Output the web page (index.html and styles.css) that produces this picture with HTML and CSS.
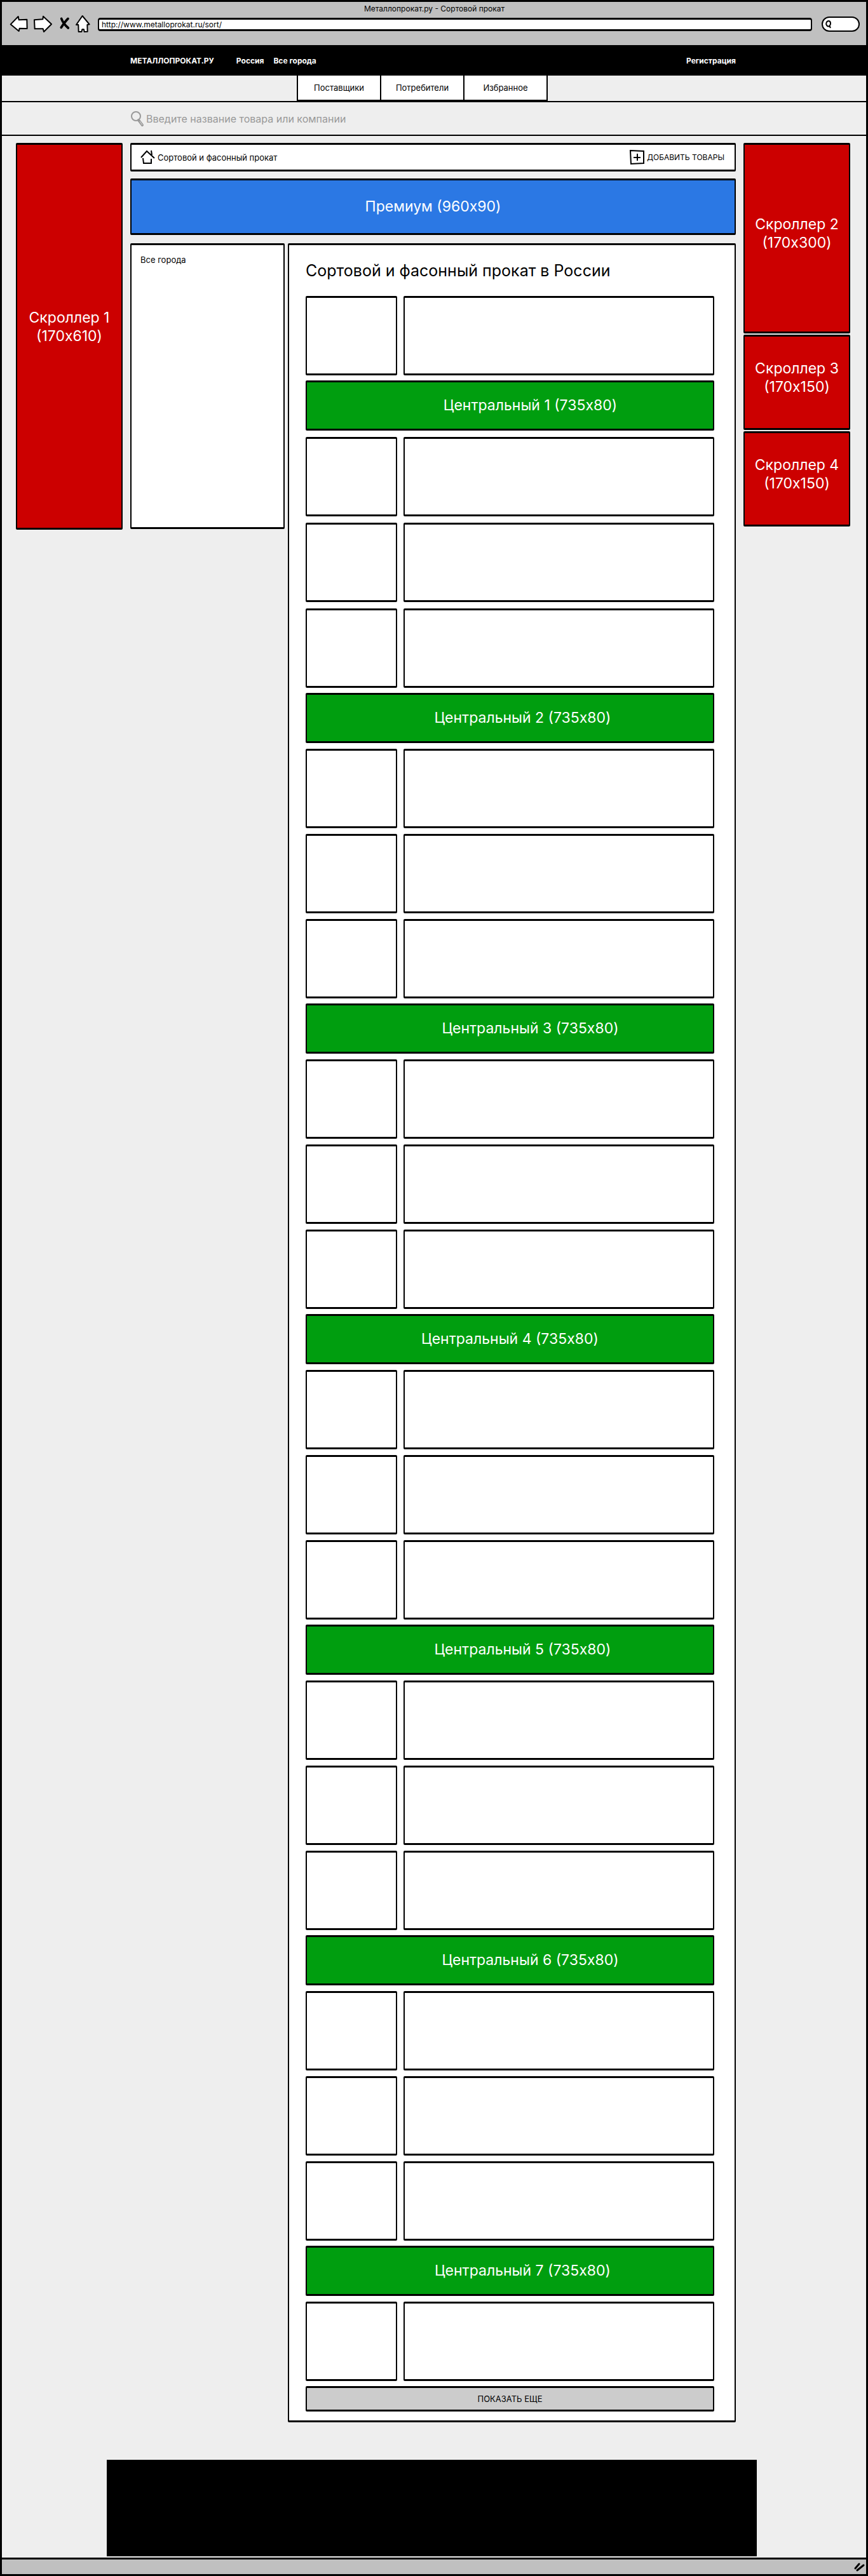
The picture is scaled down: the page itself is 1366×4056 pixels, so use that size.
FILE: index.html
```html
<!DOCTYPE html>
<html lang="ru">
<head>
<meta charset="utf-8">
<meta name="viewport" content="width=device-width, initial-scale=1">
<title>Металлопрокат.ру - Сортовой прокат</title>
<link rel="stylesheet" href="styles.css">
</head>
<body>
<div class="window">
  <div class="chrome">
    <p class="chrome-title">Металлопрокат.ру - Сортовой прокат</p>
    <div class="toolbar">
      <button class="tool" type="button" aria-label="Назад"><svg width="32" height="30" viewBox="42 6 96 90"><path class="tool-shape" d="M50 52L86 15L89 31L127 29L128 72L92 71L89 84Z"/></svg></button>
      <button class="tool" type="button" aria-label="Вперёд"><svg width="32" height="30" viewBox="158 6 96 90"><path class="tool-shape" d="M161 31L201 28L203 14L242 51L206 87L202 73L163 73Z"/></svg></button>
      <button class="tool" type="button" aria-label="Стоп"><svg width="20" height="30" viewBox="276 6 60 90"><path class="tool-cross" d="M290 25Q298 48 322 69M321 25Q306 40 289 67"/></svg></button>
      <button class="tool" type="button" aria-label="Домой"><svg width="24" height="30" viewBox="356 6 72 90"><path class="tool-shape" d="M388 12L421 52L411 54L412 86L397 87L395 76L387 76L384 87L370 87L369 54L359 54Z"/></svg></button>
      <input class="url" type="text" value="http://www.metalloprokat.ru/sort/" aria-label="Адрес">
      <label class="pill">
        <svg width="12" height="15" viewBox="0 0 12 15"><path d="M3 9C1 6 3 2 6 2S10 6 8 9S4 10 3 9M7 9L9 13" fill="none" stroke="#000" stroke-width="2"/></svg>
        <input class="pill-input" type="text" aria-label="Поиск в интернете">
      </label>
    </div>
  </div>

  <header>
    <div class="topbar">
      <a class="brand" href="#">МЕТАЛЛОПРОКАТ.РУ</a>
      <a href="#">Россия</a>
      <a href="#">Все города</a>
      <a class="register" href="#">Регистрация</a>
    </div>
    <nav class="tabs">
      <a class="tab" href="#">Поставщики</a>
      <a class="tab" href="#">Потребители</a>
      <a class="tab" href="#">Избранное</a>
    </nav>
    <label class="search">
      <svg width="21" height="24" viewBox="0 0 21 24" fill="none" stroke="#999"><ellipse cx="9" cy="8" rx="7" ry="7" stroke-width="2"/><path d="M13 14L19 22" stroke-width="4" stroke-linecap="round"/><path d="M15 16L19 22" stroke="#ddd" stroke-width="1"/></svg>
      <input class="search-input" type="search" placeholder="Введите название товара или компании" aria-label="Поиск">
    </label>
  </header>

  <div class="page">
    <aside class="rail">
      <a class="banner scroller scroller-tall" href="#">Скроллер 1<br>(170x610)</a>
    </aside>

    <div class="center">
      <div class="crumbs box">
        <a class="crumb" href="#"><svg width="23" height="23" viewBox="0 0 23 23" fill="none" stroke="#000" stroke-width="2"><path d="M1 12L10 2L22 13M17 1L18 8M4 13L5 21L17 21L17 14"/></svg>Сортовой и фасонный прокат</a>
        <a class="crumb crumb-add" href="#"><svg width="23" height="23" viewBox="0 0 23 23" fill="none" stroke="#000" stroke-width="2"><path d="M1 1L22 2L22 21L2 22ZM12 6V17M6 12H17"/></svg>ДОБАВИТЬ ТОВАРЫ</a>
      </div>
      <a class="banner premium" href="#">Премиум (960x90)</a>

      <div class="columns">
        <aside class="cities box"><a href="#">Все города</a></aside>
        <main class="catalog box">
          <h1>Сортовой и фасонный прокат в России</h1>
          <div class="list">
            <section class="group">
              <article class="item"><div class="box"></div><div class="box"></div></article>
            </section>
            <section class="group group-lead">
              <a class="banner central central-far" href="#">Центральный 1 (735x80)</a>
              <article class="item"><div class="box"></div><div class="box"></div></article>
              <article class="item"><div class="box"></div><div class="box"></div></article>
              <article class="item"><div class="box"></div><div class="box"></div></article>
            </section>
            <section class="group">
              <a class="banner central central-mid" href="#">Центральный 2 (735x80)</a>
              <article class="item"><div class="box"></div><div class="box"></div></article>
              <article class="item"><div class="box"></div><div class="box"></div></article>
              <article class="item"><div class="box"></div><div class="box"></div></article>
            </section>
            <section class="group">
              <a class="banner central central-far" href="#">Центральный 3 (735x80)</a>
              <article class="item"><div class="box"></div><div class="box"></div></article>
              <article class="item"><div class="box"></div><div class="box"></div></article>
              <article class="item"><div class="box"></div><div class="box"></div></article>
            </section>
            <section class="group">
              <a class="banner central" href="#">Центральный 4 (735x80)</a>
              <article class="item"><div class="box"></div><div class="box"></div></article>
              <article class="item"><div class="box"></div><div class="box"></div></article>
              <article class="item"><div class="box"></div><div class="box"></div></article>
            </section>
            <section class="group">
              <a class="banner central central-mid" href="#">Центральный 5 (735x80)</a>
              <article class="item"><div class="box"></div><div class="box"></div></article>
              <article class="item"><div class="box"></div><div class="box"></div></article>
              <article class="item"><div class="box"></div><div class="box"></div></article>
            </section>
            <section class="group">
              <a class="banner central central-far" href="#">Центральный 6 (735x80)</a>
              <article class="item"><div class="box"></div><div class="box"></div></article>
              <article class="item"><div class="box"></div><div class="box"></div></article>
              <article class="item"><div class="box"></div><div class="box"></div></article>
            </section>
            <section class="group">
              <a class="banner central central-mid" href="#">Центральный 7 (735x80)</a>
              <article class="item"><div class="box"></div><div class="box"></div></article>
            </section>
            <button class="more" type="button">ПОКАЗАТЬ ЕЩЕ</button>
          </div>
        </main>
      </div>
    </div>

    <aside class="rail">
      <a class="banner scroller scroller-mid" href="#">Скроллер 2<br>(170x300)</a>
      <a class="banner scroller" href="#">Скроллер 3<br>(170x150)</a>
      <a class="banner scroller" href="#">Скроллер 4<br>(170x150)</a>
    </aside>
  </div>

  <footer class="footer"></footer>
  <div class="status">
    <svg width="18" height="16" viewBox="0 0 18 16" fill="none" stroke="#000" stroke-width="3" stroke-linecap="round"><path d="M3 10L9 3M6 13L16 5"/></svg>
  </div>
</div>
</body>
</html>
```
FILE: styles.css
```css
* { box-sizing: border-box; }

body {
  margin: 0;
  background: #eee;
  color: #000;
  font: 13px/18px Inter, "Noto Sans", sans-serif;
}

a { color: inherit; text-decoration: none; }
p, h1 { margin: 0; }
svg { display: block; flex: none; overflow: visible; }
button, input { font: inherit; color: inherit; }

.window { border: 3px solid #000; border-bottom-width: 0; }

/* browser frame */
.chrome {
  padding: 2px 10px 18px 11px;
  background: #c0c0c0;
  font-size: 12px;
}
.chrome-title { text-align: center; }
.toolbar { display: flex; align-items: center; gap: 7px; height: 30px; }
.tool { padding: 0; border: 0; background: none; }
.tool-shape { fill: #fff; stroke: #000; stroke-width: 6; stroke-linejoin: round; }
.tool-cross { fill: none; stroke: #000; stroke-width: 11; stroke-linecap: round; }
.url {
  flex: 1;
  min-width: 0;
  height: 21px;
  margin: 0 8px 0 4px;
  padding: 0 4px;
  border: 3px solid #000;
  border-width: 3px 2px;
  border-radius: 4px;
  background: #fff;
}
.pill {
  display: flex;
  align-items: center;
  width: 60px;
  height: 24px;
  padding: 0 3px;
  border: 2px solid #000;
  border-radius: 12px;
  background: #fff;
}
.pill-input { flex: 1; min-width: 0; padding: 0; border: 0; background: none; outline: 0; }

/* site header */
.topbar {
  display: flex;
  align-items: center;
  gap: 15px;
  height: 48px;
  padding: 2px 205px 0 202px;
  background: #000;
  color: #fff;
  font-size: 12px;
  font-weight: 700;
}
.brand { margin-right: 20px; }
.register { margin-left: auto; }
.tabs {
  display: flex;
  justify-content: center;
  height: 42px;
  padding-right: 39px;
  border-bottom: 2px solid #000;
}
.tab {
  display: flex;
  align-items: center;
  justify-content: center;
  width: 133px;
  margin-right: -2px;
  border: 2px solid #000;
  border-top: 0;
  background: #fff;
}
.search {
  display: flex;
  align-items: center;
  gap: 4px;
  height: 53px;
  padding: 0 205px 0 202px;
  border-bottom: 2px solid #000;
}
.search-input {
  flex: 1;
  min-width: 0;
  padding: 0;
  border: 0;
  outline: 0;
  background: none;
  font-size: 16px;
}
.search-input::placeholder { color: #999; opacity: 1; }

/* page grid */
.page {
  display: grid;
  grid-template-columns: 168px minmax(0, 1fr) 168px;
  column-gap: 12px;
  align-items: start;
  padding: 11px 25px 0 22px;
}
.box, .banner, .more {
  border: 3px solid #000;
  border-width: 3px 2px;
  border-radius: 2px;
}
.box { background: #fff; }
.rail { display: grid; gap: 2px; }
.banner {
  display: flex;
  align-items: center;
  justify-content: center;
  color: #fff;
  font-size: 23px;
  line-height: 29px;
  text-align: center;
}
.scroller { min-height: 150px; padding-bottom: 14px; background: #c00; }
.scroller-mid { min-height: 300px; }
.scroller-tall { min-height: 609px; padding-bottom: 30px; }
.crumbs {
  display: flex;
  align-items: center;
  justify-content: space-between;
  height: 45px;
  padding: 0 16px 0 14px;
}
.crumb { display: flex; align-items: center; gap: 4px; }
.crumb-add { font-size: 12px; }
.premium { height: 89px; margin: 11px 0 13px; background: #2b78e4; }
.columns {
  display: grid;
  grid-template-columns: 243px minmax(0, 1fr);
  column-gap: 5px;
  align-items: start;
}
.cities { min-height: 450px; padding: 14px; }

/* catalogue */
.catalog { padding: 0 32px 14px 26px; }
h1 { font-size: 25px; font-weight: 400; line-height: 80px; }
.list { display: grid; gap: 8px; }
.group { display: grid; gap: 9px; }
.group-lead { gap: 10px; }
.item { display: grid; grid-template-columns: 144px minmax(0, 1fr); gap: 10px; height: 125px; }
.central { height: 79px; background: #009e0f; }
.central-mid { padding-left: 40px; }
.central-far { padding-left: 64px; }
.more { height: 40px; padding: 0; background: #ccc; }

/* bottom of the window */
.footer { height: 152px; margin: 59px 172px 2px 165px; background: #000; }
.status {
  display: flex;
  align-items: center;
  justify-content: flex-end;
  height: 29px;
  padding-right: 2px;
  border: 3px solid #000;
  border-width: 3px 0;
  background: #c0c0c0;
}
```
